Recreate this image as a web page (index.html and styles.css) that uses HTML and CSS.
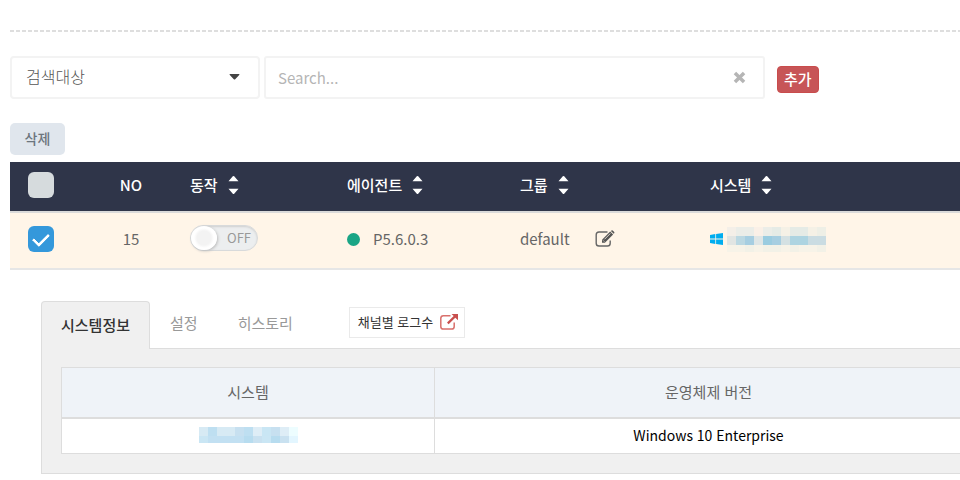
FILE: index.html
```html
<!DOCTYPE html>
<html lang="ko">
<head>
<meta charset="utf-8">
<title>에이전트</title>
<link rel="stylesheet" href="styles.css">
</head>
<body>
<svg class="defs" aria-hidden="true">
  <symbol id="sort" viewBox="0 0 10 20"><path d="M0 6.200 4.300 1.300Q5 .6 5.700 1.300L10 6.200ZM0 13.800 4.300 18.700Q5 19.400 5.700 18.700L10 13.800Z" fill="#fff"/></symbol>
</svg>
<main class="page">
  <form class="search">
    <label class="target">
      <select aria-label="검색대상"><option>검색대상</option></select>
      <svg class="caret" viewBox="0 0 10 6"><path d="M0 0H10Q9.800 1 9 1.800L5.700 5.200Q5 5.900 4.300 5.200L1 1.800Q.2 1 0 0Z" fill="#444"/></svg>
    </label>
    <div class="query">
      <input type="text" placeholder="Search..." aria-label="Search">
      <button type="button" class="clear" aria-label="지우기"><svg viewBox="0 0 12 12"><path d="M1.800 1.800 10.200 10.200M10.200 1.800 1.800 10.200" stroke="#b5b5b5" stroke-width="3.200"/></svg></button>
    </div>
    <button type="button" class="add">추가</button>
  </form>
  <button type="button" class="delete">삭제</button>

  <table class="agents">
    <colgroup><col class="c-check"><col class="c-no"><col class="c-run"><col class="c-agent"><col class="c-group"><col></colgroup>
    <thead>
      <tr>
        <th class="center"><input type="checkbox" aria-label="전체 선택"></th>
        <th class="center">NO</th>
        <th><span class="head">동작<svg><use href="#sort"/></svg></span></th>
        <th><span class="head">에이전트<svg><use href="#sort"/></svg></span></th>
        <th><span class="head">그룹<svg><use href="#sort"/></svg></span></th>
        <th><span class="head">시스템<svg><use href="#sort"/></svg></span></th>
      </tr>
    </thead>
    <tbody>
      <tr>
        <td class="center"><input type="checkbox" checked aria-label="15 선택"></td>
        <td class="center">15</td>
        <td><button type="button" class="toggle" role="switch" aria-checked="false"><span class="knob"></span>OFF</button></td>
        <td><span class="agent"><span class="dot"></span>P5.6.0.3</span></td>
        <td><span class="group">default
          <button type="button" class="edit" aria-label="편집"><svg viewBox="0 0 20 18"><path d="M12.500 2H4Q1.200 2 1.200 4.800V13.200Q1.200 16 4 16H12.500Q15.200 16 15.200 13.200V10.500" fill="none" stroke="#666" stroke-width="1.400"/><path d="M7 9.800 15.200 1.600 18.100 4.500 9.900 12.700H7Z" fill="#555"/><path d="M15.900 .9 16.500 .4Q17.100 0 17.700 .5L19.200 2Q19.700 2.600 19.200 3.200L18.700 3.800Z" fill="#555"/><path d="M8.100 10.400 9.300 11.600M9.500 9.300 15.300 3.500" stroke="#fff5e8" stroke-width=".8"/></svg></button></span></td>
        <td><span class="system">
          <svg class="win" viewBox="0 0 13 12"><path d="M0 1.900 5.300 1.100V5.600H0ZM6.100 1 13 0V5.600H6.100ZM0 6.400H5.300V10.900L0 10.100ZM6.100 6.400H13V12L6.100 11Z" fill="#00adef"/></svg>
          <svg class="mosaic" viewBox="0 0 99 25" shape-rendering="crispEdges"><path fill="#f4efe8" d="M0 0h9v9H0z"/><path fill="#ebede8" d="M9 0h18v9H9zM36 0h9v9h-9z"/><path fill="#faf0e7" d="M27 0h9v9h-9z"/><path fill="#e5ebe6" d="M45 0h9v9h-9zM63 0h18v9H63z"/><path fill="#f5f1e6" d="M54 0h9v9h-9zM81 0h9v9h-9z"/><path fill="#eeefe6" d="M90 0h9v9h-9z"/><path fill="#e1e5e3" d="M0 9h9v9H0z"/><path fill="#bbd8e2" d="M9 9h9v9H9z"/><path fill="#a6cee1" d="M18 9h9v9h-9zM45 9h9v9h-9z"/><path fill="#dfe6e6" d="M27 9h9v9h-9z"/><path fill="#9acce0" d="M36 9h9v9h-9z"/><path fill="#d4e1e3" d="M54 9h9v9h-9z"/><path fill="#add4e1" d="M63 9h18v9H63z"/><path fill="#cadce2" d="M81 9h18v9H81z"/><path fill="#f7f3e8" d="M0 18h99v7H0z"/><path fill="#f2f1e7" d="M18 18h9v7h-9zM36 18h18v7H36zM63 18h9v7h-9zM90 18h9v7h-9z"/></svg>
        </span></td>
      </tr>
    </tbody>
  </table>

  <section class="detail">
    <nav class="tabs">
      <a href="#info" class="tab active">시스템정보</a>
      <a href="#config" class="tab">설정</a>
      <a href="#history" class="tab">히스토리</a>
      <a href="#logs" class="logs">채널별 로그수<svg viewBox="0 0 18 16"><path d="M10.500 1.700H3.400Q.8 1.700 .8 4.300V12.400Q.8 15 3.400 15H11.600Q14.200 15 14.200 12.400V8.500" fill="none" stroke="#d9706c" stroke-width="1.500"/><path d="M7.800 9.400 15.500 1.900" stroke="#c9504e" stroke-width="2.200"/><path d="M11.500 0H18V6.300L15.800 4.300 13.700 2.100Z" fill="#c9504e"/></svg></a>
    </nav>
    <div class="panel" id="info">
      <table class="info">
        <colgroup><col class="c-name"><col></colgroup>
        <thead><tr><th>시스템</th><th>운영체제 버전</th></tr></thead>
        <tbody><tr>
          <td><svg class="mosaic-small" viewBox="0 0 99 16" shape-rendering="crispEdges"><path fill="#d7eaf4" d="M0 0h9v9H0zM18 0h18v9H18z"/><path fill="#bedff1" d="M9 0h9v9H9zM45 0h9v9h-9z"/><path fill="#c7e0f0" d="M36 0h9v9h-9zM72 0h9v9h-9z"/><path fill="#deedf6" d="M54 0h9v9h-9zM81 0h9v9h-9z"/><path fill="#c9e6f4" d="M63 0h9v9h-9z"/><path fill="#edfdff" d="M90 0h9v9h-9z"/><path fill="#cae6f4" d="M0 9h9v7H0zM63 9h9v7h-9z"/><path fill="#c2e0f2" d="M9 9h36v7H9z"/><path fill="#b7dcef" d="M45 9h9v7h-9zM72 9h9v7h-9z"/><path fill="#c9e1f0" d="M54 9h9v7h-9zM81 9h9v7h-9z"/><path fill="#e3f6ff" d="M90 9h9v7h-9z"/></svg></td>
          <td>Windows 10 Enterprise</td>
        </tr></tbody>
      </table>
    </div>
  </section>
</main>
</body>
</html>
```

FILE: styles.css
```css
* { box-sizing: border-box; }
body {
  margin: 0;
  overflow: hidden;
  background: #fff;
  color: #666;
  font: 15px/20px "Noto Sans CJK KR", sans-serif;
}
button, input, select { font: inherit; margin: 0; }
svg { display: block; flex: none; }
.defs { position: absolute; width: 0; height: 0; }
.page { padding: 30px 0 0 10px; }

.search {
  display: flex;
  align-items: center;
  gap: 4px;
  padding-top: 26px;
  background: repeating-linear-gradient(90deg, #dedede 0 4px, #fff 4px 6px) top / 100% 2px no-repeat;
}
.target { position: relative; width: 250px; }
.target select {
  display: block;
  width: 100%;
  height: 43px;
  padding: 0 14px 3px;
  border: 2px solid #f3f3f3;
  border-radius: 4px;
  background: #fff;
  color: #555;
  font-size: 16px;
  font-weight: 300;
  appearance: none;
}
.caret { position: absolute; right: 20px; top: 18px; width: 11px; height: 6px; pointer-events: none; }
.query {
  display: flex;
  align-items: center;
  width: 501px;
  height: 43px;
  padding: 0 17px 0 12px;
  border: 2px solid #f3f3f3;
  border-radius: 3px;
}
.query input { flex: 1; min-width: 0; padding: 0; border: 0; outline: 0; background: none; }
.query input::placeholder { color: #b5b5b5; opacity: 1; }
.clear { padding: 0; border: 0; background: none; }
.clear svg { width: 13px; height: 13px; }
.add {
  height: 27px;
  margin: 4px 0 0 8px;
  padding: 0 6px 2px;
  border: 1px solid #c94c4c;
  border-radius: 4px;
  background: #c75557;
  color: #fff;
  font-weight: 500;
}
.delete {
  display: block;
  width: 55px;
  height: 32px;
  margin: 24px 0 7px;
  padding: 0 0 2px;
  border: 0;
  border-radius: 5px;
  background: #e0e6ed;
  color: #6c757d;
  font-size: 14px;
  font-weight: 500;
}

table { width: 100%; border-collapse: collapse; table-layout: fixed; }
.c-check { width: 62px; }
.c-no { width: 118px; }
.c-run { width: 157px; }
.c-agent { width: 173px; }
.c-group { width: 190px; }
.agents th, .agents td { padding: 0 0 3px; text-align: left; }
.agents .center { text-align: center; }
.agents th {
  height: 50px;
  padding-bottom: 4px;
  border-bottom: 2px solid #dadada;
  background: #2f3549;
  color: #fff;
  font-weight: 500;
}
.agents td { height: 57px; border-bottom: 2px solid #e6e6e6; background: #fff5e8; }
.head, .agent, .group, .system { display: flex; align-items: center; }
.head { gap: 10px; }
.head svg { width: 11px; height: 20px; }
input[type="checkbox"] {
  display: block;
  width: 26px;
  height: 26px;
  margin: 0 auto;
  border-radius: 6px;
  background: #d6dbdd;
  appearance: none;
}
input[type="checkbox"]:checked {
  display: grid;
  place-items: center;
  background: #3498db;
}
input[type="checkbox"]:checked::after {
  content: "";
  width: 13px;
  height: 7px;
  margin-bottom: 3px;
  border: solid #fff;
  border-width: 0 0 3px 3px;
  border-radius: 1px;
  transform: rotate(-45deg);
}
.toggle {
  display: flex;
  align-items: center;
  gap: 10px;
  width: 68px;
  height: 26px;
  margin-bottom: 2px;
  padding: 0;
  border: 1px solid #d8dadb;
  border-radius: 13px;
  background: #eceeef;
  box-shadow: inset 0 1px 2px #d0d0d0;
  color: #999;
  font-size: 13px;
}
.knob {
  width: 26px;
  height: 24px;
  border-radius: 50%;
  background: radial-gradient(circle, #f3f3f3 0 7px, #fff 10px);
  box-shadow: 1px 1px 3px #bbb;
}
.agent { gap: 13px; }
.dot { width: 13px; height: 13px; border-radius: 50%; background: #1aa585; }
.group { gap: 25px; }
.edit { padding: 0; border: 0; background: none; }
.edit svg { width: 20px; height: 18px; }
.system { gap: 4px; }
.win { width: 13px; height: 12px; }
.mosaic { width: 99px; height: 25px; }

.detail { margin: 31px -24px 0 31px; }
.tabs { display: flex; align-items: flex-start; }
.tab {
  height: 47px;
  padding: 11px 19px 0;
  border: 1px solid transparent;
  color: #999;
  text-decoration: none;
}
.tab.active {
  position: relative;
  margin-bottom: -1px;
  padding-top: 13px;
  height: 48px;
  border-color: #ddd;
  border-bottom: 0;
  border-radius: 4px 4px 0 0;
  background: #f0f0f0;
  color: #333;
  font-weight: 500;
}
.logs {
  display: flex;
  align-items: center;
  gap: 7px;
  height: 31px;
  margin: 6px 0 0 36px;
  padding: 0 6px 2px 8px;
  border: 1px solid #eaeaea;
  color: #333;
  font-size: 13px;
  text-decoration: none;
}
.logs svg { width: 18px; height: 16px; }
.panel { padding: 18px 0 19px 19px; border: 1px solid #ddd; background: #f0f0f0; }
.c-name { width: 373px; }
.info { background: #fff; }
.info th, .info td { padding: 0; border: 1px solid #ddd; text-align: center; }
.info th { height: 50px; border-bottom-width: 2px; background: #eff3f8; font-weight: 400; }
.info td { height: 36px; padding-bottom: 2px; color: #000; font-size: 14px; }
.mosaic-small { width: 99px; height: 16px; margin: 0 auto; }
```
